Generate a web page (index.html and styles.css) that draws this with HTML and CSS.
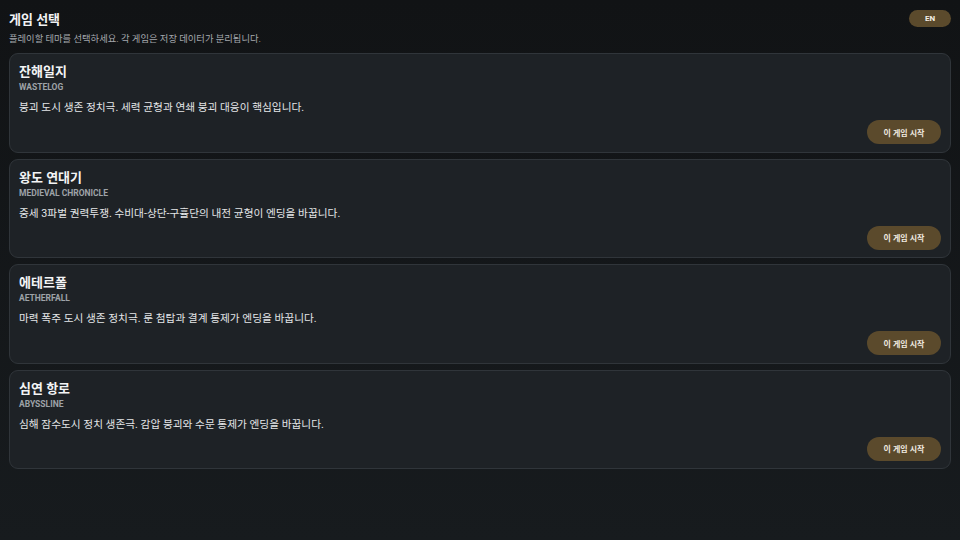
FILE: index.html
```html
<!DOCTYPE html>
<html lang="ko">
<head>
    <meta charset="UTF-8">
    <title>게임 선택</title>
    <link rel="stylesheet" href="styles.css">
</head>
<body>
    <div class="top">
        <div>
            <h1>게임 선택</h1>
            <p class="lead">플레이할 테마를 선택하세요. 각 게임은 저장 데이터가 분리됩니다.</p>
        </div>
        <button class="lang">EN</button>
    </div>

    <div class="list">
        <div class="card">
            <h2>잔해일지</h2>
            <div class="code">WASTELOG</div>
            <p class="desc">붕괴 도시 생존 정치극. 세력 균형과 연쇄 붕괴 대응이 핵심입니다.</p>
            <div class="actions"><button class="start">이 게임 시작</button></div>
        </div>
        <div class="card">
            <h2>왕도 연대기</h2>
            <div class="code">MEDIEVAL CHRONICLE</div>
            <p class="desc">중세 3파벌 권력투쟁. 수비대-상단-구휼단의 내전 균형이 엔딩을 바꿉니다.</p>
            <div class="actions"><button class="start">이 게임 시작</button></div>
        </div>
        <div class="card">
            <h2>에테르폴</h2>
            <div class="code">AETHERFALL</div>
            <p class="desc">마력 폭주 도시 생존 정치극. 룬 첨탑과 결계 통제가 엔딩을 바꿉니다.</p>
            <div class="actions"><button class="start">이 게임 시작</button></div>
        </div>
        <div class="card">
            <h2>심연 항로</h2>
            <div class="code">ABYSSLINE</div>
            <p class="desc">심해 잠수도시 정치 생존극. 감압 붕괴와 수문 통제가 엔딩을 바꿉니다.</p>
            <div class="actions"><button class="start">이 게임 시작</button></div>
        </div>
    </div>
</body>
</html>
```

FILE: styles.css
```css
body {
    margin: 0;
    padding: 9px 9px;
    min-height: 540px;
    box-sizing: border-box;
    font-family: Roboto, "Noto Sans CJK KR", sans-serif;
    background: linear-gradient(#111315, #171b1e);
    color: #e9eaeb;
}
.top {
    display: flex;
    justify-content: space-between;
    align-items: flex-start;
}
h1 {
    margin: 2px 0 0;
    font-size: 13px;
    line-height: 18px;
    font-weight: 700;
    color: #f1f2f3;
}
.lead {
    margin: 3px 0 0;
    font-size: 9.3px;
    line-height: 13px;
    color: #a4a8ad;
}
.lang {
    margin-top: 1px;
    width: 42px;
    height: 17px;
    padding: 0;
    border: none;
    border-radius: 9px;
    background-color: #5b4a2c;
    color: #f3efe6;
    font-family: Roboto, sans-serif;
    font-size: 8px;
    font-weight: 700;
}
.list {
    margin-top: 8px;
    display: flex;
    flex-direction: column;
    gap: 6px;
}
.card {
    background-color: #1e2226;
    border: 1px solid #30353a;
    border-radius: 9px;
    padding: 8px 9px 7.5px 9px;
}
h2 {
    margin: 0;
    font-size: 13px;
    line-height: 20px;
    font-weight: 700;
    color: #f3f4f5;
}
.code {
    font-size: 8.5px;
    line-height: 10px;
    font-weight: 700;
    color: #9ea3a8;
}
.desc {
    margin: 8px 0 0;
    font-size: 10.7px;
    line-height: 16px;
    color: #e4e6e8;
}
.actions {
    display: flex;
    justify-content: flex-end;
    margin-top: 4px;
}
.start {
    width: 74px;
    height: 24px;
    padding: 0;
    border: none;
    border-radius: 12px;
    background-color: #5b4a2c;
    color: #f1ece2;
    font-family: Roboto, "Noto Sans CJK KR", sans-serif;
    font-size: 8px;
    font-weight: 700;
}
```
